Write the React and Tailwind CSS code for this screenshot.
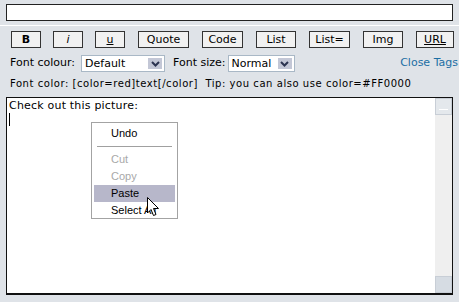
import React from 'react'

const buttons = [
  { label: 'B', cls: 'ml-[11px] w-[30px] font-bold' },
  { label: 'i', cls: 'ml-[12px] w-[30px] italic' },
  { label: 'u', cls: 'ml-[12px] w-[30px] underline' },
  { label: 'Quote', cls: 'ml-[13px] w-[51px]' },
  { label: 'Code', cls: 'ml-[13px] w-[41px]' },
  { label: 'List', cls: 'ml-[13px] w-[40px]' },
  { label: 'List=', cls: 'ml-[13px] w-[41px]' },
  { label: 'Img', cls: 'ml-[13px] w-[40px]' },
  { label: 'URL', cls: 'ml-[13px] w-[38px] underline' },
]

const Chevron = () => (
  <svg width="9" height="6" viewBox="0 0 9 6">
    <path d="M1 1 L4.5 4.5 L8 1" fill="none" stroke="#2b3350" strokeWidth="2" />
  </svg>
)

const Select = ({ value, width }) => (
  <div className={`${width} h-[17px] flex items-stretch bg-white border border-[#a9b8c6]`}>
    <span className="flex-1 pl-[3px] leading-[15px]">{value}</span>
    <span className="w-[16px] m-px flex items-center justify-center bg-[#c3c7d6] border border-white">
      <Chevron />
    </span>
  </div>
)

const Pointer = () => (
  <svg className="absolute left-[147px] top-[197px]" width="13" height="21" viewBox="0 0 13 21">
    <path d="M0.5 0.5 L0.5 16 L4 12.5 L6.5 18.5 L9 17.5 L6.5 11.5 L11.5 11.5 Z" fill="#fff" stroke="#000" strokeWidth="1" />
  </svg>
)

export default function App() {
  return (
    <div className="relative w-[459px] h-[302px] overflow-hidden bg-[#dfe3e8] text-[11px] text-black font-['DejaVu_Sans',sans-serif]">
      <div className="pt-[4px] px-[6px]">
        <div className="h-[17px] bg-white border border-[#222]" />
      </div>
      <div className="mt-[4px] h-px bg-white" />

      <div className="mt-[5px] flex">
        {buttons.map((b) => (
          <div
            key={b.label}
            className={`${b.cls} h-[17px] flex items-center justify-center bg-[#f1f1f1] border border-[#333] leading-none`}
          >
            {b.label}
          </div>
        ))}
      </div>

      <div className="mt-[7px] flex items-center h-[17px]">
        <span className="ml-[10px]">Font colour:</span>
        <div className="ml-[6px]"><Select value="Default" width="w-[84px]" /></div>
        <span className="ml-[8px]">Font size:</span>
        <div className="ml-[2px]"><Select value="Normal" width="w-[67px]" /></div>
        <span className="ml-auto mr-[1px] text-[#1c6ea4]">Close Tags</span>
      </div>

      <div className="mt-[5px] ml-[10px] text-[10px] leading-[14px] tracking-[0.55px]">
        Font color: [color=red]text[/color]&nbsp; Tip: you can also use color=#FF0000
      </div>

      <div className="mt-[6px] mx-[6px] h-[198px] flex bg-white border border-[#111] border-b-2">
        <div className="flex-1 pl-[2px] pt-[1px]">
          <div className="leading-[14px] tracking-[0.2px]">Check out this picture:</div>
          <div className="w-px h-[13px] bg-black" />
        </div>
        <div className="w-[17px] flex flex-col bg-[#efefef]">
          <div className="h-[17px] flex items-end justify-center pb-[4px] bg-[#e4e8ec] border border-[#c8ced6]">
            <div className="w-[9px] h-px bg-white" />
          </div>
          <div className="flex-1" />
          <div className="h-[17px] bg-[#d6dce3] border border-[#c8ced6]" />
        </div>
      </div>

      <div className="absolute left-[91px] top-[122px] w-[87px] h-[97px] bg-white border border-[#a3a3a3] font-['Liberation_Sans',sans-serif] text-[11px] pt-[2px] px-[2px]">
        <div className="h-[17px] leading-[17px] pl-[17px]">Undo</div>
        <div className="my-[4px] mx-[3px] h-px bg-[#a0a0a0]" />
        <div className="h-[17px] leading-[17px] pl-[17px] text-[#a8a8a8]">Cut</div>
        <div className="h-[17px] leading-[17px] pl-[17px] text-[#a8a8a8]">Copy</div>
        <div className="h-[17px] leading-[17px] pl-[17px] bg-[#b7b7ca]">Paste</div>
        <div className="h-[17px] leading-[17px] pl-[17px]">Select All</div>
      </div>
      <Pointer />
    </div>
  )
}
